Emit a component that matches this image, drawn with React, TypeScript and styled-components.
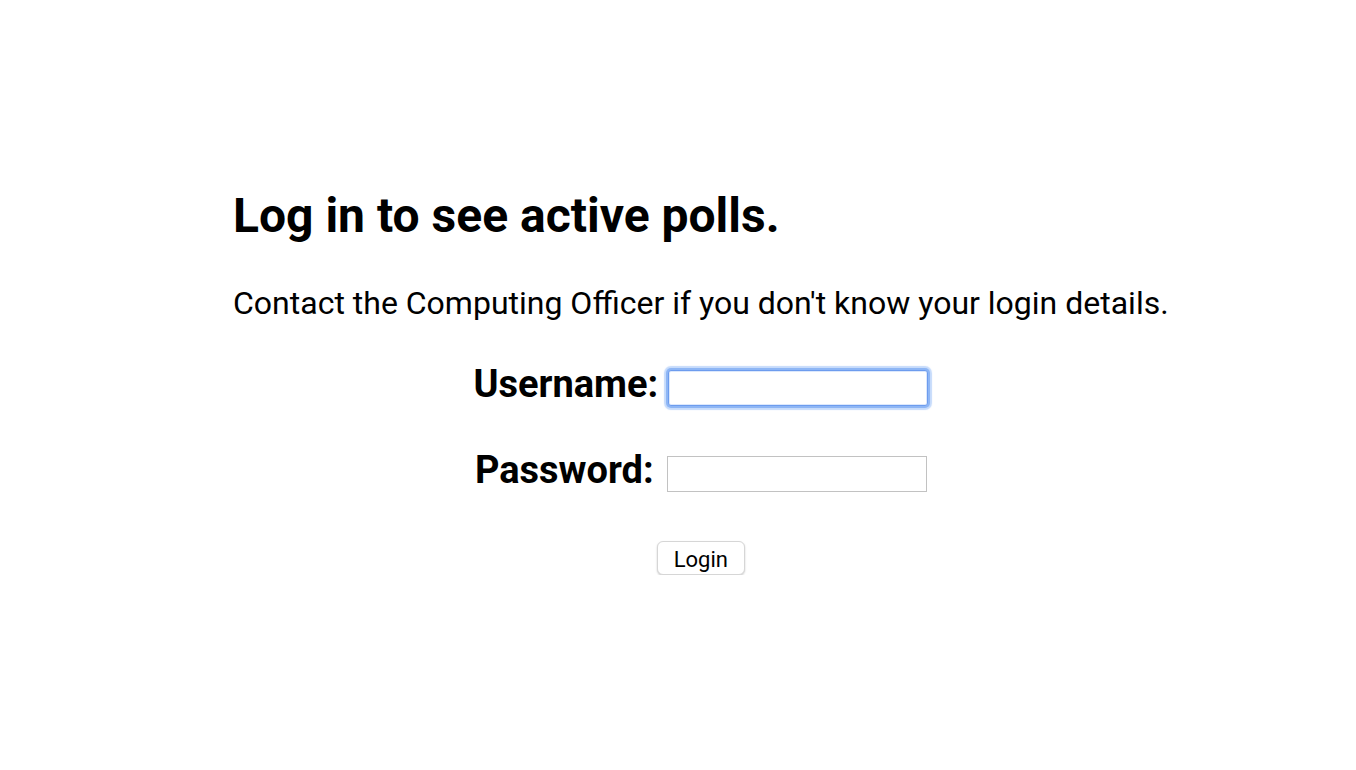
import styled, { createGlobalStyle } from "styled-components";

const GlobalStyle = createGlobalStyle`
  html, body {
    margin: 0;
    padding: 0;
    background: #ffffff;
  }
  body {
    font-family: Roboto, "Liberation Sans", sans-serif;
    color: #000000;
  }
`;

const Page = styled.main`
  padding: 188px 0 0 233px;
`;

const Content = styled.section`
  width: fit-content;
  display: flex;
  flex-direction: column;
`;

const Heading = styled.h1`
  margin: 0;
  font-size: 48px;
  font-weight: 700;
  line-height: 56px;
`;

const Intro = styled.p`
  margin: 40px 0 0;
  font-size: 32px;
  line-height: 38px;
  white-space: nowrap;
`;

const LoginForm = styled.form`
  display: flex;
  flex-direction: column;
  align-items: center;
  margin-top: 40px;
  gap: 42px;
`;

const Row = styled.div<{ $gap: number }>`
  display: flex;
  align-items: flex-end;
  gap: ${(p) => p.$gap}px;
`;

const Label = styled.label`
  font-size: 38px;
  font-weight: 700;
  line-height: 44px;
`;

const Field = styled.input<{ $focused?: boolean }>`
  box-sizing: border-box;
  width: 260px;
  height: 36px;
  margin: 0;
  padding: 0 6px;
  font-size: 20px;
  font-family: Roboto, "Liberation Sans", sans-serif;
  background: #ffffff;
  border: 1px solid ${(p) => (p.$focused ? "#6d9cee" : "#c2c2c2")};
  border-radius: ${(p) => (p.$focused ? "3px" : "0")};
  box-shadow: ${(p) =>
    p.$focused
      ? "inset 0 0 0 1px #dce8fc, 0 0 0 2px #8eb6f5, 0 0 1px 4px rgba(160, 195, 248, 0.6)"
      : "none"};
  outline: none;
`;

const ButtonRow = styled.div`
  display: flex;
  justify-content: center;
  margin-top: 7px;
`;

const Button = styled.button`
  box-sizing: border-box;
  width: 88px;
  height: 34px;
  font-family: Roboto, "Liberation Sans", sans-serif;
  font-size: 22px;
  line-height: 1;
  color: #000000;
  background: #ffffff;
  border: 1px solid #d6d6d6;
  border-radius: 6px;
  box-shadow: 0 1px 2px rgba(0, 0, 0, 0.2);
  padding: 3px 0 0;
`;

function App() {
  return (
    <>
      <GlobalStyle />
      <Page>
        <Content>
          <Heading>Log in to see active polls.</Heading>
          <Intro>Contact the Computing Officer if you don't know your login details.</Intro>
          <LoginForm onSubmit={(e) => e.preventDefault()}>
            <Row $gap={10}>
              <Label htmlFor="username">Username:</Label>
              <Field id="username" type="text" $focused />
            </Row>
            <Row $gap={13}>
              <Label htmlFor="password">Password:</Label>
              <Field id="password" type="password" />
            </Row>
            <ButtonRow>
              <Button type="submit">Login</Button>
            </ButtonRow>
          </LoginForm>
        </Content>
      </Page>
    </>
  );
}

export default App;
